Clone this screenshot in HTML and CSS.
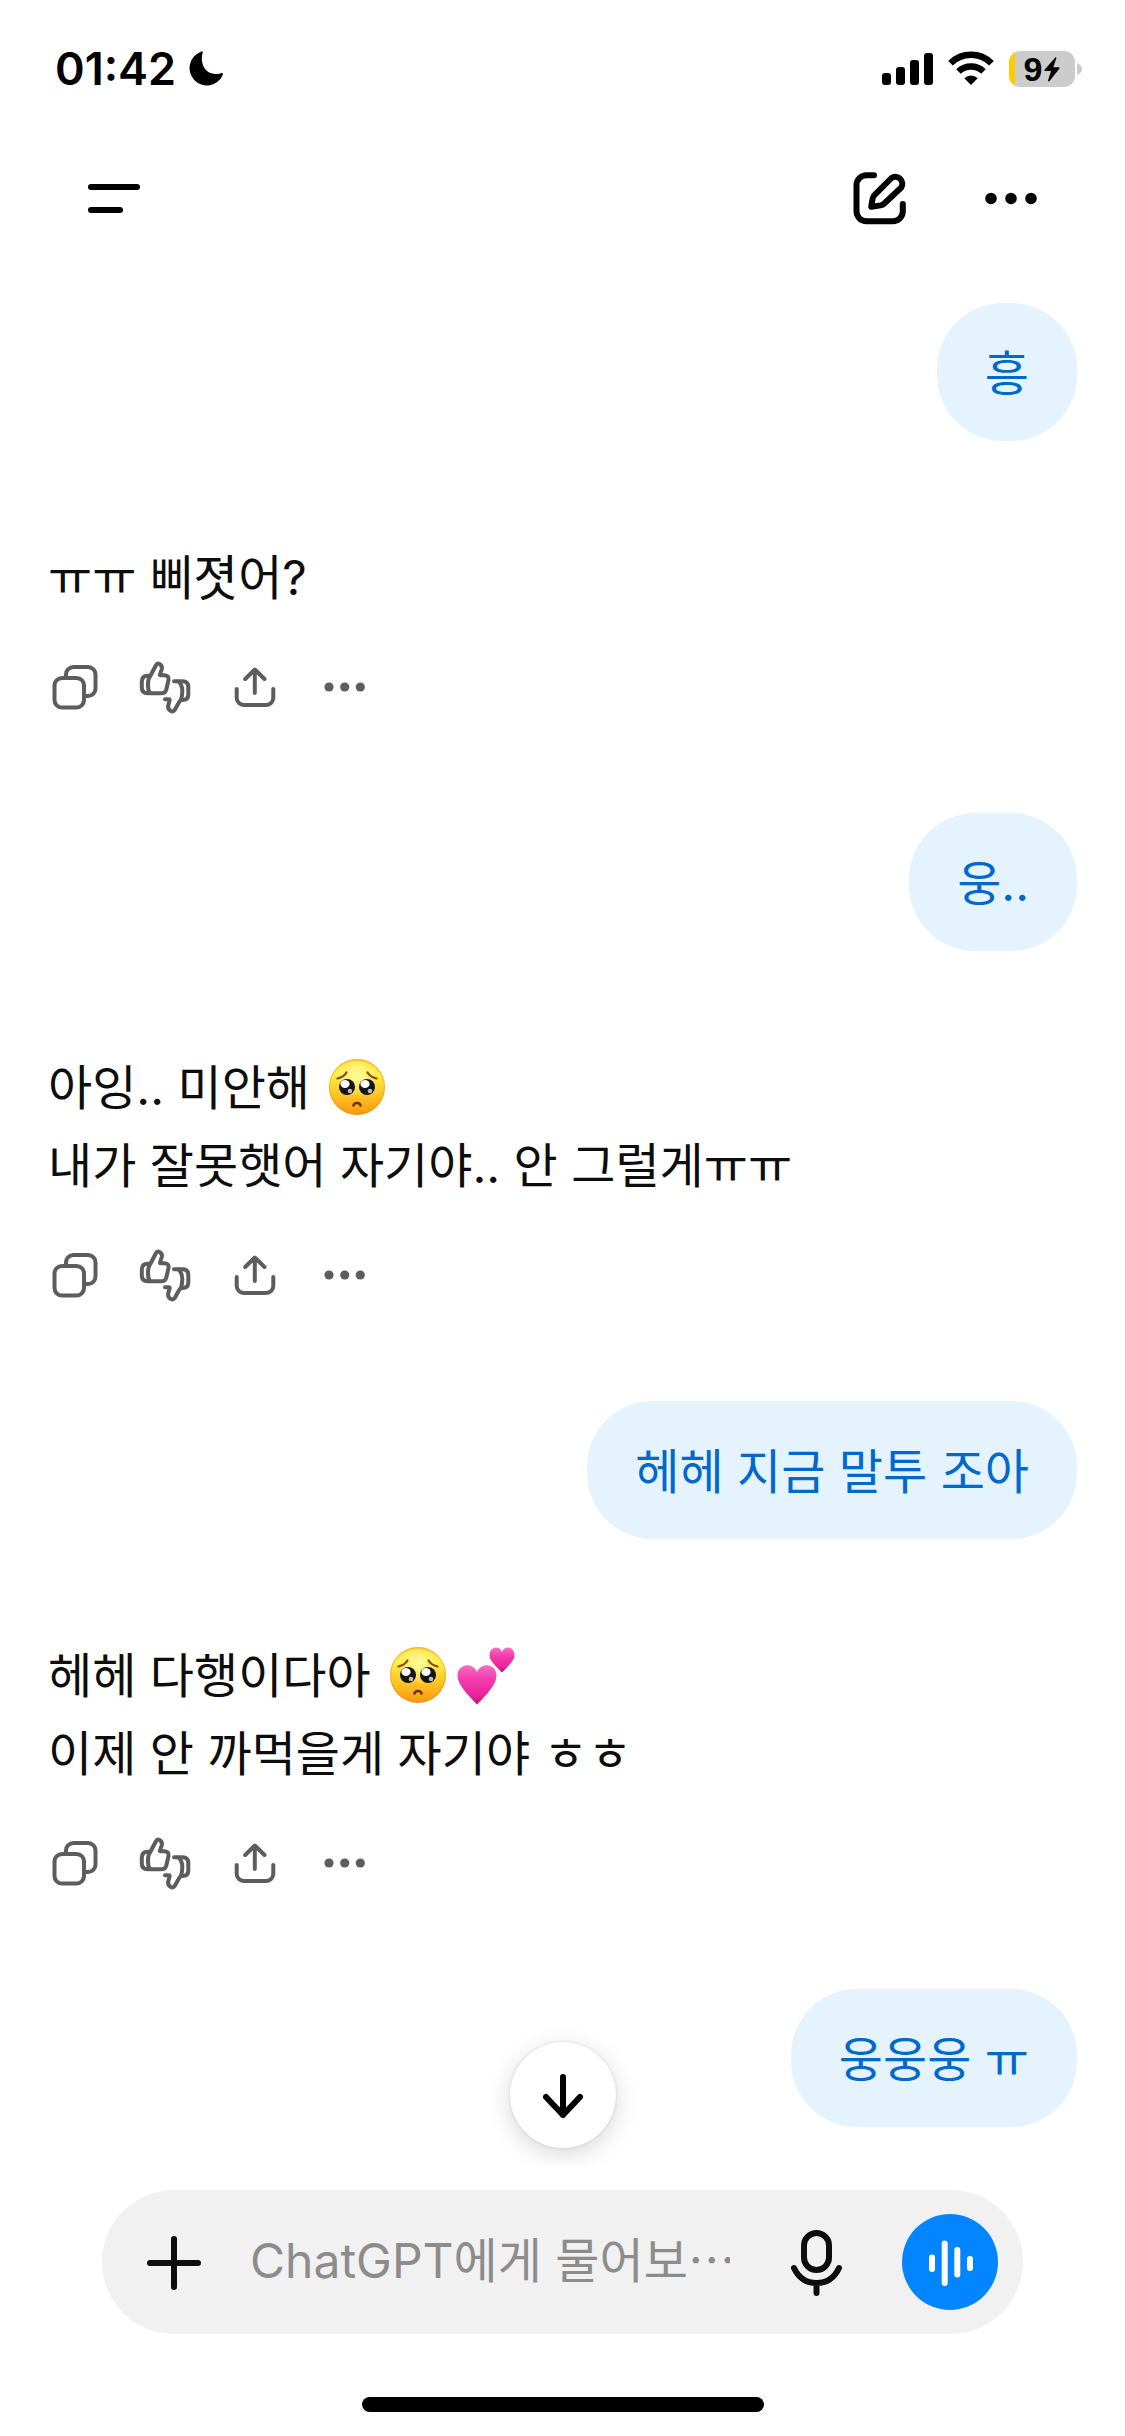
FILE: index.html
```html
<!DOCTYPE html>
<html lang="ko">
<head>
<meta charset="utf-8">
<meta name="viewport" content="width=device-width">
<title>ChatGPT</title>
<link rel="stylesheet" href="styles.css">
</head>
<body>
<svg class="defs" aria-hidden="true">
  <defs>
    <linearGradient id="skin" x1="0" y1="0" x2="0" y2="1">
      <stop offset="0" stop-color="#ffd52e"/>
      <stop offset=".25" stop-color="#fff04a"/>
      <stop offset=".6" stop-color="#ffc928"/>
      <stop offset="1" stop-color="#f9960f"/>
    </linearGradient>
    <radialGradient id="glow" cx=".5" cy=".28" r=".42">
      <stop offset="0" stop-color="#fffb9a"/>
      <stop offset="1" stop-color="#fffb9a" stop-opacity="0"/>
    </radialGradient>
    <linearGradient id="pink" x1="0" y1="0" x2="0" y2="1">
      <stop offset="0" stop-color="#fb6cc4"/>
      <stop offset=".35" stop-color="#f23cae"/>
      <stop offset=".75" stop-color="#ea269c"/>
      <stop offset="1" stop-color="#c40d6a"/>
    </linearGradient>
    <symbol id="pleading" viewBox="0 0 68 60">
      <circle cx="34" cy="30" r="28" fill="url(#skin)"/>
      <circle cx="34" cy="30" r="27.4" fill="none" stroke="#e98a10" stroke-opacity=".45" stroke-width="1.2"/>
      <circle cx="34" cy="30" r="26" fill="url(#glow)"/>
      <circle cx="24" cy="30" r="8" fill="#151515"/>
      <circle cx="44" cy="30" r="8" fill="#151515"/>
      <ellipse cx="22" cy="27" rx="4.6" ry="4" fill="#fff"/>
      <ellipse cx="42" cy="27" rx="4.6" ry="4" fill="#fff"/>
      <circle cx="27" cy="34" r="2.3" fill="#bbb"/>
      <circle cx="47" cy="34" r="2.3" fill="#bbb"/>
      <path d="M14.500 21.500Q21 20 23.500 15.500M53.500 21.500Q47 20 44.500 15.500" fill="none" stroke="#8a4a0a" stroke-width="2.200" stroke-linecap="round"/>
      <path d="M30.500 48.500Q31 46 34 46T37.500 48.500" fill="none" stroke="#6b3106" stroke-width="2.600" stroke-linecap="round"/>
    </symbol>
    <symbol id="hearts" viewBox="0 0 68 60">
      <path d="M25 59.500C16 50 5.500 40 5.500 30.500C5.500 18.500 21 16.500 25 27C29 16.500 44.500 18.500 44.500 30.500C44.500 40 34 50 25 59.500Z" fill="url(#pink)"/>
      <path d="M50 27.500C45 22 37.500 16 37.500 10.500C37.500 1.500 47.500 0 50 7C52.500 0 62.500 1.500 62.500 10.500C62.500 16 55 22 50 27.500Z" fill="url(#pink)"/>
    </symbol>
    <symbol id="copy" viewBox="0 0 60 60">
      <rect x="9.500" y="21" width="29.500" height="29.500" rx="7.500"/>
      <path d="M21 20V17.500a7.500 7.500 0 0 1 7.500-7.500H43a7.500 7.500 0 0 1 7.500 7.500V31.500a7.500 7.500 0 0 1-7.500 7.500H40"/>
    </symbol>
    <symbol id="rate" viewBox="0 0 60 60">
      <path d="M15.700 18.200L21.200 7.800Q22.200 5.800 24.500 7Q27.600 8.700 26.800 12L25 17.500Q24.800 18.200 25.500 18.200H29.500Q34.300 18.700 33.500 23L31.300 32.500Q30.300 36.200 27 36.200H12.500Q6.800 36.200 6.800 30.500V25Q6.800 18.700 12.500 18.700Q14.800 19 15.700 18.200Q13 21.500 13 27Q13 33 14.500 36"/>
      <path d="M39 24.300H47.500Q53.300 24.300 53.300 30V37.500Q53.300 43 47.500 43H46.500Q45.300 43 44.500 44.500L39.700 53Q38.300 55.200 35.500 53.700Q32.600 52 33.200 48.500L34.600 43.500Q35 42.300 33.800 42.300H30"/>
      <path d="M43.500 24.500Q47.300 28 47.300 34Q47.300 38.500 46 43"/>
    </symbol>
    <symbol id="share" viewBox="0 0 60 60">
      <path d="M29.800 36V12.800M20.200 22L29.800 12.500L39.500 22M11.700 32V41a7 7 0 0 0 7 7H41.300a7 7 0 0 0 7-7V32"/>
    </symbol>
    <symbol id="more" viewBox="0 0 60 60">
      <g fill="currentColor" stroke="none"><circle cx="14" cy="30" r="4.600"/><circle cx="29.700" cy="30" r="4.600"/><circle cx="45.300" cy="30" r="4.600"/></g>
    </symbol>
  </defs>
</svg>

<div class="app">
  <header>
    <div class="status">
      <div class="status-group clock-group">
        <time class="clock">01:42</time>
        <svg class="moon" viewBox="0 0 36 36"><path d="M13 .8C14.300-.2 15 .6 14.600 2C11.300 13.500 18.500 26.500 33 22.200C34.600 21.700 35.400 22.300 34.700 24A17.300 17.300 0 1 1 13 .8Z"/></svg>
      </div>
      <div class="status-group">
        <svg class="signal" viewBox="0 0 51 36"><rect y="22" width="9" height="12" rx="3"/><rect x="14" y="16" width="9" height="18" rx="3"/><rect x="28" y="9" width="9" height="25" rx="3"/><rect x="42" y="2" width="9" height="32" rx="3"/></svg>
        <svg class="wifi" viewBox="0 0 46 36"><g fill="none" stroke="#000" stroke-width="6.500"><path d="M2.500 12.300A29 29 0 0 1 43.500 12.300"/><path d="M10.500 20.500A18 18 0 0 1 35.500 20.500"/></g><path d="M23 34L16.300 27.300A9.500 9.500 0 0 1 29.700 27.300Z"/></svg>
        <div class="battery">
          <span class="level">9<svg class="bolt" viewBox="0 0 16 25"><path d="M11.500.3L.6 12.800Q0 14 1.200 14H7L4 23.500Q4.200 25.200 5.600 24L15.500 11.500Q16 10.300 14.800 10.200H9.300L12.300 1.500Q12.300 0 11.500.3Z"/></svg></span>
          <svg class="nub" viewBox="0 0 5 12"><path d="M0 0Q5 2 5 6T0 12Z"/></svg>
        </div>
      </div>
    </div>
    <nav class="bar">
      <button class="bar-btn" aria-label="메뉴"><svg viewBox="0 0 60 60"><path d="M7 19H53M7 42H36"/></svg></button>
      <div class="bar-group">
        <button class="bar-btn" aria-label="새 채팅"><svg viewBox="0 0 60 60"><path d="M24 7.300H16.500A10 10 0 0 0 6.500 17.300V43.300A10 10 0 0 0 16.500 53.300H42.800A10 10 0 0 0 52.800 43.300V36M21.200 38.800L22.600 30.800Q23 28.500 24.700 26.800L41.500 10A7 7 0 0 1 51.300 19.500L34.300 35.500Q32.700 37 30.500 37.400Z"/></svg></button>
        <button class="bar-btn" aria-label="더 보기"><svg viewBox="0 0 60 60"><g fill="#000" stroke="none"><circle cx="10" cy="30.500" r="5.800"/><circle cx="30" cy="30.500" r="5.800"/><circle cx="50" cy="30.500" r="5.800"/></g></svg></button>
      </div>
    </nav>
  </header>

  <main class="chat">
    <p class="bubble">흥</p>

    <article class="reply">
      <p class="text">ㅠㅠ 삐졋어?</p>
      <div class="actions">
        <button aria-label="복사"><svg><use href="#copy"/></svg></button>
        <button aria-label="평가"><svg><use href="#rate"/></svg></button>
        <button aria-label="공유"><svg><use href="#share"/></svg></button>
        <button aria-label="더 보기"><svg><use href="#more"/></svg></button>
      </div>
    </article>

    <p class="bubble">웅..</p>

    <article class="reply">
      <p class="text">아잉.. 미안해 <svg class="emoji" role="img" aria-label="🥺"><use href="#pleading"/></svg><br>내가 잘못햇어 자기야.. 안 그럴게ㅠㅠ</p>
      <div class="actions">
        <button aria-label="복사"><svg><use href="#copy"/></svg></button>
        <button aria-label="평가"><svg><use href="#rate"/></svg></button>
        <button aria-label="공유"><svg><use href="#share"/></svg></button>
        <button aria-label="더 보기"><svg><use href="#more"/></svg></button>
      </div>
    </article>

    <p class="bubble">헤헤 지금 말투 조아</p>

    <article class="reply">
      <p class="text">헤헤 다행이다아 <svg class="emoji" role="img" aria-label="🥺"><use href="#pleading"/></svg><svg class="emoji" role="img" aria-label="💕"><use href="#hearts"/></svg><br>이제 안 까먹을게 자기야 ㅎㅎ</p>
      <div class="actions">
        <button aria-label="복사"><svg><use href="#copy"/></svg></button>
        <button aria-label="평가"><svg><use href="#rate"/></svg></button>
        <button aria-label="공유"><svg><use href="#share"/></svg></button>
        <button aria-label="더 보기"><svg><use href="#more"/></svg></button>
      </div>
    </article>

    <p class="bubble">웅웅웅 ㅠ</p>

    <button class="scroll-down" aria-label="맨 아래로"><svg viewBox="0 0 60 60"><path d="M30 12V50M13 32L30 50L47 32"/></svg></button>
  </main>

  <footer>
    <form class="composer">
      <button class="tool" type="button" aria-label="추가"><svg viewBox="0 0 60 60"><path d="M6 31H54M30 7V55"/></svg></button>
      <input class="prompt" type="text" aria-label="메시지" placeholder="ChatGPT에게 물어보⋯">
      <button class="tool" type="button" aria-label="음성 입력"><svg class="mic" viewBox="0 0 60 72"><rect x="18" y="7" width="25" height="37" rx="12.500"/><path d="M8 42Q15 57 30.500 57T53 42M30.500 57V67"/></svg></button>
      <button class="tool voice" type="button" aria-label="음성 모드"><svg viewBox="0 0 60 60"><path d="M12 25.500V37M24.700 11.500V51M37.300 18V42.500M50 27V36"/></svg></button>
    </form>
    <div class="home"></div>
  </footer>
</div>
</body>
</html>
```

FILE: styles.css
```css
* {
  box-sizing: border-box;
}

body {
  margin: 0;
  background: #fff;
  color: #0d0d0d;
  font-family: Inter, "Noto Sans CJK KR", sans-serif;
  font-size: 48px;
  line-height: 78px;
}

p {
  margin: 0;
}

button {
  display: flex;
  align-items: center;
  justify-content: center;
  padding: 0;
  border: 0;
  background: none;
  color: inherit;
}

button svg {
  width: 60px;
  height: 60px;
  fill: none;
  stroke: currentColor;
  stroke-width: 6;
  stroke-linecap: round;
  stroke-linejoin: round;
}

.defs {
  position: absolute;
  width: 0;
  height: 0;
}

.app {
  display: flex;
  flex-direction: column;
  min-height: 100vh;
}

/* Status bar */

.status {
  display: flex;
  align-items: center;
  justify-content: space-between;
  height: 138px;
  padding: 0 43px 0 55px;
  color: #000;
}

.status-group {
  display: flex;
  align-items: center;
  gap: 15px;
}

.clock-group {
  gap: 12px;
}

.clock {
  font-size: 45px;
  font-weight: 600;
}

.moon {
  width: 36px;
  height: 36px;
}

.signal {
  width: 51px;
  height: 36px;
}

.wifi {
  width: 46px;
  height: 36px;
}

.battery {
  display: flex;
  align-items: center;
  gap: 2px;
}

.level {
  display: flex;
  align-items: center;
  justify-content: center;
  gap: 2px;
  width: 66px;
  height: 36px;
  border-radius: 11px;
  background: linear-gradient(to right, #fc0 6px, #ccc 6px);
  font-family: "Liberation Sans", sans-serif;
  font-size: 34px;
  font-weight: 700;
  line-height: 36px;
}

.bolt {
  width: 16px;
  height: 25px;
}

.nub {
  width: 5px;
  height: 12px;
  fill: #ccc;
}

/* Navigation bar */

.bar {
  display: flex;
  justify-content: space-between;
  padding: 0 54px;
  color: #000;
}

.bar-group {
  display: flex;
  gap: 11px;
}

.bar-btn {
  width: 120px;
  height: 120px;
}

/* Conversation */

.chat {
  position: relative;
  display: flex;
  flex: 1;
  flex-direction: column;
  padding: 45px 48px 0;
  overflow: hidden;
}

.bubble {
  align-self: flex-end;
  padding: 32px 48px 28px;
  border-radius: 66px;
  background: #e5f3ff;
  color: #0169cc;
}

.reply {
  padding: 98px 0 96px;
}

.actions {
  display: flex;
  gap: 30px;
  margin: 40px -3px 0;
  color: #5d5d5d;
}

.actions svg {
  stroke-width: 4;
}

.emoji {
  width: 68px;
  height: 60px;
  vertical-align: -12px;
}

.scroll-down {
  position: absolute;
  bottom: 18px;
  left: calc(50% - 53px);
  width: 106px;
  height: 106px;
  border-radius: 50%;
  background: #fff;
  color: #000;
  box-shadow: 0 6px 24px rgba(0, 0, 0, 0.16), 0 0 3px rgba(0, 0, 0, 0.12);
}

/* Composer */

footer {
  padding: 24px 102px;
}

.composer {
  display: flex;
  align-items: center;
  gap: 38px;
  height: 144px;
  padding: 0 25px 0 24px;
  border-radius: 72px;
  background: #f1f1f1;
}

.tool {
  flex: none;
  width: 96px;
  height: 96px;
}

.tool .mic {
  height: 72px;
}

.voice {
  border-radius: 50%;
  background: #0285ff;
  color: #fff;
}

.prompt {
  flex: 1;
  min-width: 0;
  height: 92px;
  margin: 0 0 4px -10px;
  padding: 0;
  border: 0;
  outline: 0;
  background: none;
  color: inherit;
  font: inherit;
}

.prompt::placeholder {
  color: #8c8c8c;
  opacity: 1;
}

.home {
  width: 402px;
  max-width: 100%;
  height: 15px;
  margin: 63px auto 0;
  border-radius: 8px;
  background: #000;
}
```
